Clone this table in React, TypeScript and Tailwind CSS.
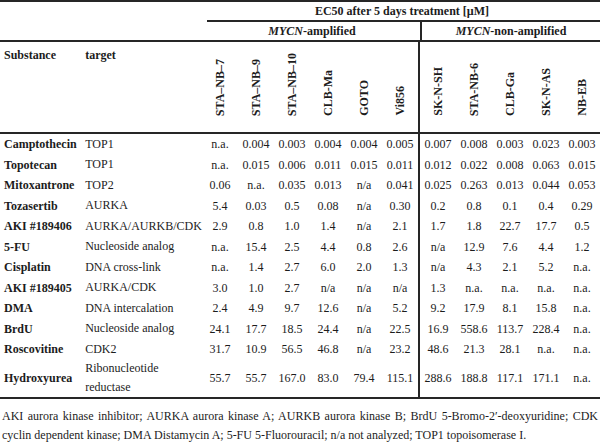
import React from "react";

type Row = { name: string; target: React.ReactNode; amp: string[]; non: string[]; tall?: boolean };

const ampLines = ["STA–NB–7", "STA–NB–9", "STA–NB–10", "CLB-Ma", "GOTO", "Vi856"];
const nonLines = ["SK-N-SH", "STA-NB-6", "CLB-Ga", "SK-N-AS", "NB-EB"];

const rows: Row[] = [
  { name: "Camptothecin", target: "TOP1", amp: ["n.a.", "0.004", "0.003", "0.004", "0.004", "0.005"], non: ["0.007", "0.008", "0.003", "0.023", "0.003"] },
  { name: "Topotecan", target: "TOP1", amp: ["n.a.", "0.015", "0.006", "0.011", "0.015", "0.011"], non: ["0.012", "0.022", "0.008", "0.063", "0.015"] },
  { name: "Mitoxantrone", target: "TOP2", amp: ["0.06", "n.a.", "0.035", "0.013", "n/a", "0.041"], non: ["0.025", "0.263", "0.013", "0.044", "0.053"] },
  { name: "Tozasertib", target: "AURKA", amp: ["5.4", "0.03", "0.5", "0.08", "n/a", "0.30"], non: ["0.2", "0.8", "0.1", "0.4", "0.29"] },
  { name: "AKI #189406", target: "AURKA/AURKB/CDK", amp: ["2.9", "0.8", "1.0", "1.4", "n/a", "2.1"], non: ["1.7", "1.8", "22.7", "17.7", "0.5"] },
  { name: "5-FU", target: "Nucleoside analog", amp: ["n.a.", "15.4", "2.5", "4.4", "0.8", "2.6"], non: ["n/a", "12.9", "7.6", "4.4", "1.2"] },
  { name: "Cisplatin", target: "DNA cross-link", amp: ["n.a.", "1.4", "2.7", "6.0", "2.0", "1.3"], non: ["n/a", "4.3", "2.1", "5.2", "n.a."] },
  { name: "AKI #189405", target: "AURKA/CDK", amp: ["3.0", "1.0", "2.7", "n/a", "n/a", "n/a"], non: ["1.3", "n.a.", "n.a.", "n.a.", "n.a."] },
  { name: "DMA", target: "DNA intercalation", amp: ["2.4", "4.9", "9.7", "12.6", "n/a", "5.2"], non: ["9.2", "17.9", "8.1", "15.8", "n.a."] },
  { name: "BrdU", target: "Nucleoside analog", amp: ["24.1", "17.7", "18.5", "24.4", "n/a", "22.5"], non: ["16.9", "558.6", "113.7", "228.4", "n.a."] },
  { name: "Roscovitine", target: "CDK2", amp: ["31.7", "10.9", "56.5", "46.8", "n/a", "23.2"], non: ["48.6", "21.3", "28.1", "n.a.", "n.a."] },
  {
    name: "Hydroxyurea",
    target: (
      <>
        Ribonucleotide
        <br />
        reductase
      </>
    ),
    amp: ["55.7", "55.7", "167.0", "83.0", "79.4", "115.1"],
    non: ["288.6", "188.8", "117.1", "171.1", "n.a."],
    tall: true,
  },
];

const Label: React.FC<{ text: string }> = ({ text }) => (
  <div className="w-[36px] flex flex-col items-center justify-end pb-[16px]">
    <span className="[writing-mode:vertical-rl] rotate-180 font-bold whitespace-nowrap leading-[14px]">{text}</span>
  </div>
);

const App: React.FC = () => {
  return (
    <div className="w-[600px] h-[446px] bg-white text-[#1c1c1c] text-[12px] font-[family-name:'Liberation_Serif',serif] overflow-hidden">
      <div className="border-t-2 border-[#262626]">
        {/* EC50 header */}
        <div className="flex h-[20px]">
          <div className="w-[207px]" />
          <div className="flex-1 border-b-2 border-[#262626] flex items-center justify-center pr-[3px] font-bold">
            EC50 after 5 days treatment [µM]
          </div>
        </div>

        <div className="flex h-[20px] border-b-2 border-[#262626] font-bold">
          <div className="w-[204px]" />
          <div className="w-[216px] flex items-center justify-center">
            <i>MYCN</i>-amplified
          </div>
          <div className="flex-1 border-l-2 border-[#262626] flex items-center justify-center">
            <i>MYCN</i>-non-amplified
          </div>
        </div>

        {/* cell line labels */}
        <div className="flex h-[92px] border-b-2 border-[#262626]">
          <div className="w-[86px] pl-[4px] pt-[4px] font-bold">Substance</div>
          <div className="w-[118px] pt-[4px] font-bold">target</div>
          <div className="flex">
            {ampLines.map((l) => (
              <Label key={l} text={l} />
            ))}
          </div>
          <div className="flex flex-1 border-l-2 border-[#262626]">
            {nonLines.map((l) => (
              <Label key={l} text={l} />
            ))}
          </div>
        </div>

        {/* data */}
        <div className="border-b-2 border-[#262626]">
          {rows.map((r) => (
            <div key={r.name} className={`flex ${r.tall ? "h-[37px]" : "h-[20.5px]"}`}>
              <div className="w-[86px] pl-[4px] flex items-center font-bold whitespace-nowrap">{r.name}</div>
              <div className="w-[118px] flex items-center whitespace-nowrap leading-[19px]">{r.target}</div>
              <div className="flex">
                {r.amp.map((v, i) => (
                  <div key={i} className="w-[36px] flex items-center justify-center">
                    {v}
                  </div>
                ))}
              </div>
              <div className="flex flex-1 border-l-2 border-[#262626]">
                {r.non.map((v, i) => (
                  <div key={i} className="w-[36px] flex items-center justify-center">
                    {v}
                  </div>
                ))}
              </div>
            </div>
          ))}
        </div>

        {/* footnote */}
        <div className="pt-[8px] px-[2px] leading-[19px]">
          <div className="text-justify [text-align-last:justify]">
            AKI aurora kinase inhibitor; AURKA aurora kinase A; AURKB aurora kinase B; BrdU 5-Bromo-2′-deoxyuridine; CDK
          </div>
          <div>cyclin dependent kinase; DMA Distamycin A; 5-FU 5-Fluorouracil; n/a not analyzed; TOP1 topoisomerase I.</div>
        </div>
      </div>
    </div>
  );
};

export default App;
